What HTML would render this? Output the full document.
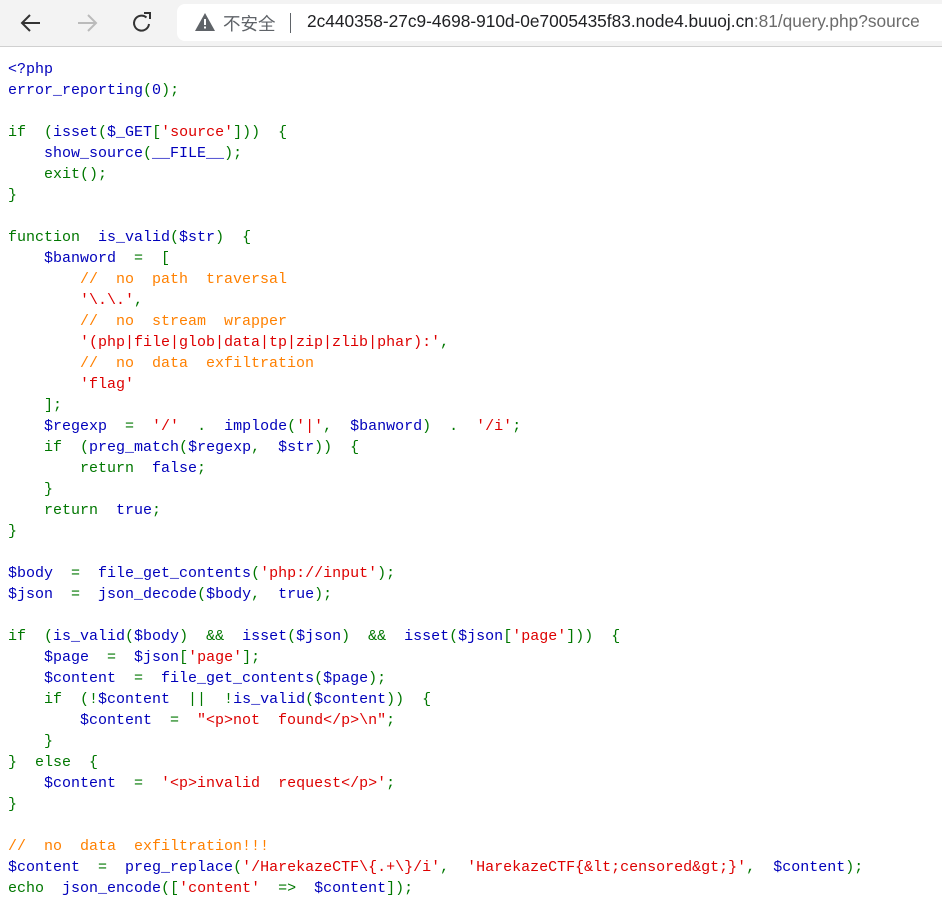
<!DOCTYPE html>
<html><head><meta charset="utf-8"><style>
html,body{margin:0;padding:0;background:#fff;width:942px;height:915px;overflow:hidden}
.bar{position:absolute;left:0;top:0;width:942px;height:46px;background:#f3f3f3;border-bottom:1px solid #d0d0d0}
.addr{position:absolute;left:177px;top:4px;width:780px;height:37px;background:#fff;border-radius:8px}
.url{position:absolute;left:307px;top:11px;font:17.3px "Liberation Sans","Noto Sans CJK SC",sans-serif;color:#202124;white-space:nowrap;letter-spacing:0}
.url span{color:#6b6b6b}
.ins{position:absolute;left:223px;top:11px;font:17.5px "Liberation Sans","Noto Sans CJK SC",sans-serif;color:#5f6368}
.sep{position:absolute;left:290px;top:13px;width:1px;height:20px;background:#5f6368}
pre{position:absolute;left:8px;top:59px;margin:0;font:15px/21px "Liberation Mono",monospace;color:#0000BB}
.k{color:#007700}.s{color:#DD0000}.c{color:#FF8000}
</style></head><body>
<div class="bar">
<svg style="position:absolute;left:20px;top:12px" width="22" height="22" viewBox="0 0 22 22"><path d="M20 11H3M10 3L2 11l8 8" fill="none" stroke="#333" stroke-width="2"/></svg>
<svg style="position:absolute;left:76px;top:12px" width="22" height="22" viewBox="0 0 22 22"><path d="M2 11h17M12 3l8 8-8 8" fill="none" stroke="#bbb" stroke-width="2"/></svg>
<svg style="position:absolute;left:131px;top:11px" width="22" height="24" viewBox="0 0 22 24"><path d="M18 13a7.5 7.5 0 1 1-2.5-6.5" fill="none" stroke="#333" stroke-width="2"/><path d="M13 2h6v6" fill="none" stroke="#333" stroke-width="2"/></svg>
<div class="addr"></div>
<svg style="position:absolute;left:195px;top:13px" width="20" height="18" viewBox="0 0 20 18"><path d="M10 0L20 18H0z" fill="#5f6368"/><rect x="9" y="6" width="2" height="6" fill="#fff"/><rect x="9" y="13.5" width="2" height="2" fill="#fff"/></svg>
<div class="ins">不安全</div><div class="sep"></div>
<div class="url">2c440358-27c9-4698-910d-0e7005435f83.node4.buuoj.cn<span>:81/query.php?source</span></div>
</div>
<pre>&lt;?php
error_reporting<span class="k">(</span>0<span class="k">);</span>

<span class="k">if  (</span>isset<span class="k">(</span>$_GET<span class="k">[</span><span class="s">'source'</span><span class="k">]))  {</span>
    show_source<span class="k">(</span>__FILE__<span class="k">);</span>
    <span class="k">exit();</span>
<span class="k">}</span>

<span class="k">function  </span>is_valid<span class="k">(</span>$str<span class="k">)  {</span>
    $banword  <span class="k">=  [</span>
        <span class="c">//  no  path  traversal</span>
        <span class="s">'\.\.'</span><span class="k">,</span>
        <span class="c">//  no  stream  wrapper</span>
        <span class="s">'(php|file|glob|data|tp|zip|zlib|phar):'</span><span class="k">,</span>
        <span class="c">//  no  data  exfiltration</span>
        <span class="s">'flag'</span>
    <span class="k">];</span>
    $regexp  <span class="k">=  </span><span class="s">'/'  </span><span class="k">.  </span>implode<span class="k">(</span><span class="s">'|'</span><span class="k">,  </span>$banword<span class="k">)  .  </span><span class="s">'/i'</span><span class="k">;</span>
    <span class="k">if  (</span>preg_match<span class="k">(</span>$regexp<span class="k">,  </span>$str<span class="k">))  {</span>
        <span class="k">return  </span>false<span class="k">;</span>
    <span class="k">}</span>
    <span class="k">return  </span>true<span class="k">;</span>
<span class="k">}</span>

$body  <span class="k">=  </span>file_get_contents<span class="k">(</span><span class="s">'php://input'</span><span class="k">);</span>
$json  <span class="k">=  </span>json_decode<span class="k">(</span>$body<span class="k">,  </span>true<span class="k">);</span>

<span class="k">if  (</span>is_valid<span class="k">(</span>$body<span class="k">)  &amp;&amp;  </span>isset<span class="k">(</span>$json<span class="k">)  &amp;&amp;  </span>isset<span class="k">(</span>$json<span class="k">[</span><span class="s">'page'</span><span class="k">]))  {</span>
    $page  <span class="k">=  </span>$json<span class="k">[</span><span class="s">'page'</span><span class="k">];</span>
    $content  <span class="k">=  </span>file_get_contents<span class="k">(</span>$page<span class="k">);</span>
    <span class="k">if  (!</span>$content  <span class="k">||  !</span>is_valid<span class="k">(</span>$content<span class="k">))  {</span>
        $content  <span class="k">=  </span><span class="s">"&lt;p&gt;not  found&lt;/p&gt;\n"</span><span class="k">;</span>
    <span class="k">}</span>
<span class="k">}  else  {</span>
    $content  <span class="k">=  </span><span class="s">'&lt;p&gt;invalid  request&lt;/p&gt;'</span><span class="k">;</span>
<span class="k">}</span>

<span class="c">//  no  data  exfiltration!!!</span>
$content  <span class="k">=  </span>preg_replace<span class="k">(</span><span class="s">'/HarekazeCTF\{.+\}/i'</span><span class="k">,  </span><span class="s">'HarekazeCTF{&amp;lt;censored&amp;gt;}'</span><span class="k">,  </span>$content<span class="k">);</span>
<span class="k">echo  </span>json_encode<span class="k">([</span><span class="s">'content'  </span><span class="k">=&gt;  </span>$content<span class="k">]);</span>
</pre>
</body></html>
